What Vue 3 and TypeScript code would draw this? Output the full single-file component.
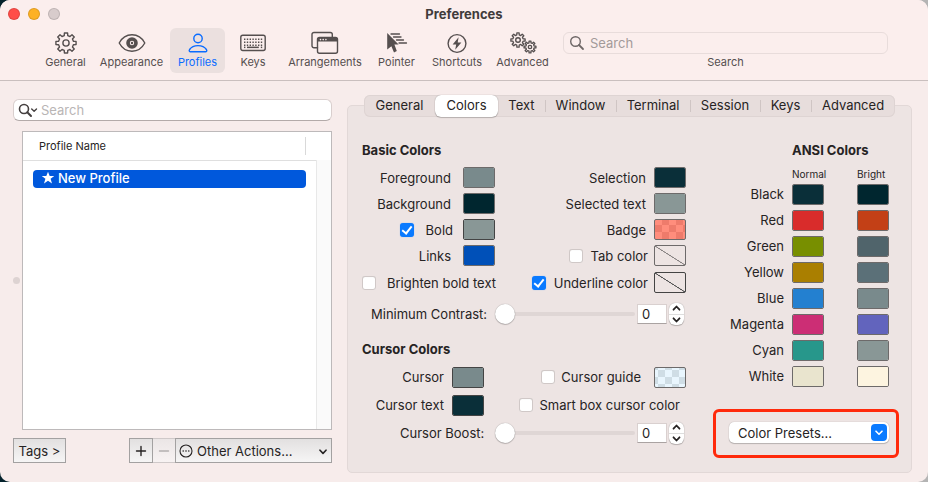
<script setup lang="ts">
import { ref } from 'vue'

interface Well {
  id: string
  label: string
  color: string
  kind?: 'clear' | 'clear-strong' | 'badge' | 'guide' | 'strong'
  check?: boolean
}

/** Outline of a cog wheel with flat-topped teeth. */
function gear(cx: number, cy: number, teeth: number, outer: number, inner: number): string {
  const step = (Math.PI * 2) / teeth
  const points: string[] = []
  for (let i = 0; i < teeth; i++) {
    const mid = i * step - Math.PI / 2
    const corners: [number, number][] = [
      [inner, -0.3],
      [outer, -0.2],
      [outer, 0.2],
      [inner, 0.3],
    ]
    for (const [r, offset] of corners) {
      const a = mid + offset * step
      points.push(`${(cx + r * Math.cos(a)).toFixed(2)} ${(cy + r * Math.sin(a)).toFixed(2)}`)
    }
  }
  return `M${points.join('L')}Z`
}

const bigGear = gear(12, 12, 8, 10.2, 7.6)
const leftGear = gear(9, 9, 8, 7.2, 5.2)
const rightGear = gear(21, 16, 8, 6, 4.2)

const keyDots: { x: number; y: number }[] = []
for (const y of [4, 7, 10]) {
  for (let i = 0; i < 7; i++) keyDots.push({ x: 4 + i * 2.8, y })
}

const tools = ['General', 'Appearance', 'Profiles', 'Keys', 'Arrangements', 'Pointer', 'Shortcuts', 'Advanced']
const activeTool = ref('Profiles')

const tabs = ['General', 'Colors', 'Text', 'Window', 'Terminal', 'Session', 'Keys', 'Advanced']
const activeTab = ref('Colors')

const basicLeft: Well[] = [
  { id: 'foreground', label: 'Foreground', color: '#798a8c' },
  { id: 'background', label: 'Background', color: '#00262f' },
  { id: 'bold', label: 'Bold', color: '#899796', check: true, kind: 'strong' },
  { id: 'links', label: 'Links', color: '#0050b8' },
]
const basicRight: Well[] = [
  { id: 'selection', label: 'Selection', color: '#0a2f39' },
  { id: 'selected-text', label: 'Selected text', color: '#899796' },
  { id: 'badge', label: 'Badge', color: '#ff8d7c', kind: 'badge' },
  { id: 'tab-color', label: 'Tab color', color: '#ede4e3', check: false, kind: 'clear' },
  { id: 'underline', label: 'Underline color', color: '#ede4e3', check: true, kind: 'clear-strong' },
]
const ansi = [
  { name: 'Black', normal: '#0a2f39', bright: '#00262f' },
  { name: 'Red', normal: '#d92c2b', bright: '#c34016' },
  { name: 'Green', normal: '#788f00', bright: '#50646b' },
  { name: 'Yellow', normal: '#aa7f00', bright: '#5b7078' },
  { name: 'Blue', normal: '#2380d0', bright: '#798a8c' },
  { name: 'Magenta', normal: '#cc2e75', bright: '#6264bd' },
  { name: 'Cyan', normal: '#27978b', bright: '#899796' },
  { name: 'White', normal: '#e9e4ce', bright: '#fdf4e0' },
]

const contrast = ref(0)
const boost = ref(0)
</script>

<template>
  <main class="window">
    <header class="titlebar">
      <div class="lights">
        <button class="light red" aria-label="Close"></button>
        <button class="light amber" aria-label="Minimize"></button>
        <button class="light grey" aria-label="Zoom" disabled></button>
      </div>
      <h1>Preferences</h1>
    </header>

    <nav class="toolbar">
      <button
        v-for="tool in tools"
        :key="tool"
        class="tool"
        :class="{ active: tool === activeTool }"
        @click="activeTool = tool"
      >
        <svg v-if="tool === 'General'" width="24" height="24" viewBox="0 0 24 24" class="line">
          <path :d="bigGear" /><circle cx="12" cy="12" r="3.1" />
        </svg>
        <svg v-else-if="tool === 'Appearance'" width="28" height="24" viewBox="0 0 28 24" class="line">
          <path d="M1.2 12C4 6.800 8.600 3.800 14 3.800S24 6.800 26.800 12C24 17.200 19.400 20.200 14 20.200S4 17.200 1.200 12Z" />
          <circle cx="14" cy="12" r="4" stroke-width="3.600" />
          <circle cx="14" cy="12" r="1.200" class="solid" />
        </svg>
        <svg v-else-if="tool === 'Profiles'" width="24" height="24" viewBox="0 0 24 24" class="line">
          <circle cx="12" cy="7.500" r="4.200" />
          <path d="M4.200 20.700H19.800C21 20.700 21 19.500 20.400 18.500C18.800 16 15.700 14.600 12 14.600S5.200 16 3.600 18.500C3 19.500 3 20.700 4.200 20.700Z" />
        </svg>
        <svg v-else-if="tool === 'Keys'" width="26" height="24" viewBox="0 0 26 24" class="line">
          <rect x="0.800" y="4.300" width="24.400" height="15.200" rx="2" />
          <g class="solid">
            <rect v-for="(dot, i) in keyDots" :key="i" :x="dot.x" :y="dot.y + 3.500" width="1.400" height="1.500" />
            <rect x="4" y="15.600" width="1.400" height="1.500" />
            <rect x="7" y="15.600" width="11.800" height="1.500" />
            <rect x="20.800" y="15.600" width="1.400" height="1.500" />
          </g>
        </svg>
        <svg v-else-if="tool === 'Arrangements'" width="28" height="24" viewBox="0 0 28 24" class="line">
          <path d="M6.500 16.800H3A2 2 0 0 1 1 14.800V3.500A2 2 0 0 1 3 1.500H19.300A2 2 0 0 1 21.300 3.500V6" />
          <rect x="6.500" y="6.500" width="20" height="15.800" rx="2" />
          <path class="solid" d="M6.500 10.600V8.500A2 2 0 0 1 8.500 6.500H24.500A2 2 0 0 1 26.500 8.500V10.600Z" />
          <g class="dots"><circle cx="9.500" cy="8.600" r="0.800" /><circle cx="12.200" cy="8.600" r="0.800" /><circle cx="14.900" cy="8.600" r="0.800" /></g>
        </svg>
        <svg v-else-if="tool === 'Pointer'" width="22" height="24" viewBox="0 0 22 24" class="line">
          <path class="solid" d="M1.200 2L12.600 13.600H8.400L10.800 20L8 21.400L5.400 15.200L1.200 18.600Z" />
          <path stroke-width="1.300" d="M5 3H13.500M7.500 6H15M10.500 9H17.500M13 12H20.500" />
        </svg>
        <svg v-else-if="tool === 'Shortcuts'" width="24" height="24" viewBox="0 0 24 24" class="line">
          <circle cx="12" cy="12.500" r="8.900" />
          <path class="solid" d="M13.600 6.300L7.600 13.400H11.200L10.200 18.800L16.400 11.500H12.700Z" />
        </svg>
        <svg v-else width="28" height="24" viewBox="0 0 28 24" class="line">
          <path stroke-width="1.300" :d="leftGear" /><circle cx="9" cy="9" r="2.300" />
          <path stroke-width="1.300" :d="rightGear" /><circle cx="21" cy="16" r="1.700" stroke-width="1.300" />
        </svg>
        <span>{{ tool }}</span>
      </button>
      <div class="toolsearch">
        <div class="field flat">
          <svg width="16" height="16" viewBox="0 0 16 16" class="line"><circle cx="6.500" cy="6.500" r="4.800" /><path d="M10 10L14 14" stroke-width="1.800" /></svg>
          <input id="tool-search" type="search" placeholder="Search" />
        </div>
        <label for="tool-search">Search</label>
      </div>
    </nav>

    <div class="content">
      <section class="profiles">
        <div class="field">
          <svg width="20" height="16" viewBox="0 0 20 16" class="line">
            <circle cx="6" cy="7" r="4.500" stroke-width="1.600" /><path d="M9.300 10.300L13 14" stroke-width="2" /><path d="M13.700 7L16.100 9.300L18.500 7" />
          </svg>
          <input type="search" placeholder="Search" aria-label="Search profiles" />
        </div>
        <div class="list-row">
          <span class="grip"></span>
          <div class="list">
            <div class="list-head"><span>Profile Name</span></div>
            <div class="list-body">
              <ul>
                <li>
                  <svg width="14" height="14" viewBox="0 0 14 14"><path fill="currentColor" d="M7 .8L8.700 5H13.300L9.600 7.800L11 12.500L7 9.700L3 12.500L4.400 7.800L.7 5H5.300Z" /></svg>
                  New Profile
                </li>
              </ul>
              <div class="gutter"></div>
            </div>
          </div>
        </div>
        <div class="actions">
          <button class="square tags">Tags &gt;</button>
          <button class="square add" aria-label="Add profile"><svg width="12" height="12" viewBox="0 0 12 12" class="line"><path d="M1.500 6H10.500M6 1.500V10.500" /></svg></button>
          <button class="square remove" aria-label="Remove profile" disabled><svg width="12" height="12" viewBox="0 0 12 12" class="line"><path d="M1.500 6H10.500" /></svg></button>
          <div class="other">
            <svg width="14" height="14" viewBox="0 0 14 14" class="line lead">
              <circle cx="7" cy="7" r="6" stroke-width="1.100" />
              <g class="solid"><circle cx="4.200" cy="7" r="0.800" /><circle cx="7" cy="7" r="0.800" /><circle cx="9.800" cy="7" r="0.800" /></g>
            </svg>
            <select aria-label="Other actions"><option>Other Actions...</option></select>
            <svg width="8" height="6" viewBox="0 0 8 6" class="line trail"><path stroke-width="1.600" d="M1 1.200L4 4.400L7 1.200" /></svg>
          </div>
        </div>
      </section>

      <section class="detail">
        <div class="tabs" role="tablist">
          <button
            v-for="tab in tabs"
            :key="tab"
            role="tab"
            :aria-selected="tab === activeTab"
            :class="{ selected: tab === activeTab }"
            @click="activeTab = tab"
          >
            {{ tab }}
          </button>
        </div>

        <div class="panel">
          <div class="settings">
            <h2>Basic Colors</h2>
            <div class="pair">
              <div class="stack">
                <div v-for="well in basicLeft" :key="well.id" class="row wide" :class="{ toggle: well.check !== undefined }">
                  <input v-if="well.check !== undefined" :id="well.id + '-on'" type="checkbox" class="check" :checked="well.check" />
                  <label :for="well.check !== undefined ? well.id + '-on' : well.id">{{ well.label }}</label>
                  <input :id="well.id" type="color" class="well" :class="well.kind" :value="well.color" :aria-label="well.label + ' color well'" />
                </div>
                <div class="row start">
                  <input id="brighten" type="checkbox" class="check" />
                  <label for="brighten">Brighten bold text</label>
                </div>
              </div>
              <div class="stack">
                <div v-for="well in basicRight" :key="well.id" class="row" :class="{ toggle: well.check !== undefined }">
                  <input v-if="well.check !== undefined" :id="well.id + '-on'" type="checkbox" class="check" :checked="well.check" />
                  <label :for="well.check !== undefined ? well.id + '-on' : well.id">{{ well.label }}</label>
                  <input :id="well.id" type="color" class="well" :class="well.kind" :value="well.color" :aria-label="well.label + ' color well'" />
                </div>
              </div>
            </div>

            <div class="slider-row">
              <label for="contrast">Minimum Contrast:</label>
              <input id="contrast" v-model.number="contrast" type="range" min="0" max="100" class="slider" />
              <input v-model.number="contrast" type="text" class="number" aria-label="Minimum contrast value" />
              <div class="stepper">
                <button aria-label="Increase contrast" @click="contrast++"><svg width="9" height="6" viewBox="0 0 9 6" class="line"><path stroke-width="1.800" d="M1.500 4.700L4.500 1.500L7.500 4.700" /></svg></button>
                <button aria-label="Decrease contrast" @click="contrast--"><svg width="9" height="6" viewBox="0 0 9 6" class="line"><path stroke-width="1.800" d="M1.500 1.300L4.500 4.500L7.500 1.300" /></svg></button>
              </div>
            </div>

            <h2 class="second">Cursor Colors</h2>
            <div class="cursor-row">
              <div class="row cursor-cell">
                <label for="cursor">Cursor</label>
                <input id="cursor" type="color" class="well strong" value="#798a8c" />
              </div>
              <div class="row guide-cell">
                <input id="guide-on" type="checkbox" class="check" />
                <label for="guide-on">Cursor guide</label>
                <input type="color" class="well guide" value="#e8f5fd" aria-label="Cursor guide color" />
              </div>
            </div>
            <div class="cursor-row">
              <div class="row cursor-cell">
                <label for="cursor-text">Cursor text</label>
                <input id="cursor-text" type="color" class="well strong" value="#0a2f39" />
              </div>
              <div class="row smart-cell">
                <input id="smart" type="checkbox" class="check" />
                <label for="smart">Smart box cursor color</label>
              </div>
            </div>
            <div class="slider-row last">
              <label for="boost">Cursor Boost:</label>
              <input id="boost" v-model.number="boost" type="range" min="0" max="100" class="slider" />
              <input v-model.number="boost" type="text" class="number" aria-label="Cursor boost value" />
              <div class="stepper">
                <button aria-label="Increase boost" @click="boost++"><svg width="9" height="6" viewBox="0 0 9 6" class="line"><path stroke-width="1.800" d="M1.500 4.700L4.500 1.500L7.500 4.700" /></svg></button>
                <button aria-label="Decrease boost" @click="boost--"><svg width="9" height="6" viewBox="0 0 9 6" class="line"><path stroke-width="1.800" d="M1.500 1.300L4.500 4.500L7.500 1.300" /></svg></button>
              </div>
            </div>
          </div>

          <div class="ansi">
            <h2>ANSI Colors</h2>
            <table>
              <thead>
                <tr><td></td><th scope="col">Normal</th><th scope="col">Bright</th></tr>
              </thead>
              <tbody>
                <tr v-for="c in ansi" :key="c.name">
                  <th scope="row">{{ c.name }}</th>
                  <td><input type="color" class="well" :value="c.normal" :aria-label="c.name + ' normal'" /></td>
                  <td><input type="color" class="well" :value="c.bright" :aria-label="c.name + ' bright'" /></td>
                </tr>
              </tbody>
            </table>
            <div class="callout">
              <div class="presets">
                <select aria-label="Color presets"><option>Color Presets...</option></select>
                <span class="cap"><svg width="8" height="6" viewBox="0 0 8 6" class="line"><path stroke-width="1.600" d="M1 1.200L4 4.200L7 1.200" /></svg></span>
              </div>
            </div>
          </div>
        </div>
      </section>
    </div>
  </main>
</template>

<style>
body {
  background: linear-gradient(to right, #04222c 50%, #b4b4b4 50%);
}
</style>

<style scoped>
* {
  box-sizing: border-box;
}
.window {
  display: flex;
  flex-direction: column;
  min-height: 100vh;
  border-radius: 10px;
  overflow: hidden;
  background: #f7eceb;
  color: #262323;
  font: 13px/18px Inter, "Liberation Sans", sans-serif;
}
button,
input,
select {
  margin: 0;
  padding: 0;
  border: 0;
  background: none;
  color: inherit;
  font: inherit;
}
h1,
h2,
ul {
  margin: 0;
  padding: 0;
  font-size: 13px;
}
svg {
  display: block;
  flex: none;
}
.line {
  fill: none;
  stroke: currentColor;
  stroke-width: 1.4;
  stroke-linejoin: round;
  stroke-linecap: round;
}
.solid {
  fill: currentColor;
  stroke: none;
}
.dots {
  fill: #fbeeed;
  stroke: none;
}
.titlebar {
  display: grid;
  grid-template-columns: 60px 1fr 60px;
  align-items: center;
  height: 28px;
  padding: 0 8px;
  background: #fbeeed;
}
.lights {
  display: flex;
  gap: 8px;
}
.light {
  width: 12px;
  height: 12px;
  border: 1px solid #0000001f;
  border-radius: 50%;
}
.red {
  background: #ff4d48;
}
.amber {
  background: #fdb124;
}
.grey {
  background: #d8cccc;
}
h1 {
  color: #403b3b;
  text-align: center;
}
.toolbar {
  display: grid;
  grid-template-columns: 55px 77px 55px 56px 88px 55px 66px 65px 1fr;
  padding: 0 40px 7px 38px;
  border-bottom: 1px solid #c9bfbe;
  background: #fbeeed;
  color: #554f4f;
  font-size: 11px;
  line-height: 14px;
}
.tool {
  display: flex;
  flex-direction: column;
  align-items: center;
  height: 45px;
  padding-top: 3px;
  border-radius: 6px;
}
.tool.active {
  background: #ebe0df;
  color: #0a6cff;
}
.toolsearch {
  display: flex;
  flex-direction: column;
  align-items: center;
  gap: 1px;
  padding: 4px 0 0 8px;
}
.field {
  display: flex;
  align-items: center;
  width: 100%;
  height: 22px;
  padding: 0 4px;
  gap: 3px;
  border: 1px solid #d9cfce;
  border-bottom-color: #b3aaa9;
  border-radius: 6px;
  background: #fff;
  color: #454040;
  font-size: 13px;
}
.field.flat {
  padding-left: 5px;
  gap: 5px;
  border-color: #e8dcdb;
  background: none;
  color: #6e6767;
}
.field input {
  flex: 1;
  min-width: 0;
  outline: none;
  appearance: none;
}
.field input::placeholder {
  color: #b9b5b5;
}
.field.flat input::placeholder {
  color: #a39a9a;
}
.content {
  display: grid;
  grid-template-columns: minmax(0, 319fr) minmax(0, 565fr);
  flex: 1;
  gap: 15px;
  padding: 14px 16px 9px 13px;
}
.profiles {
  display: flex;
  flex-direction: column;
  padding: 4px 0 10px;
}
.list-row {
  display: flex;
  flex: 1;
  align-items: center;
  gap: 2px;
  margin: 10px 0 8px;
}
.grip {
  flex: none;
  width: 7px;
  height: 7px;
  border-radius: 50%;
  background: #ddd3d2;
}
.list {
  display: flex;
  flex: 1;
  flex-direction: column;
  align-self: stretch;
  border: 1px solid #bdb9ba;
  background: #fff;
}
.list-head {
  height: 28px;
  padding: 5px 25px 5px 16px;
  font-size: 11px;
}
.list-head span {
  display: block;
  border-right: 1px solid #d9d9d9;
}
.list-body {
  display: flex;
  flex: 1;
}
.list-body ul {
  flex: 1;
  padding: 9px 10px 0;
  border-top: 1px solid #dfdfdf;
  list-style: none;
}
.list-body li {
  display: flex;
  align-items: center;
  gap: 3px;
  height: 18px;
  padding: 0 8px 2px;
  border-radius: 4px;
  background: #0058dc;
  color: #fff;
  font-weight: 500;
}
.gutter {
  width: 15px;
  border-left: 1px solid #e8e8e8;
  background: #fafafa;
}
.actions {
  display: flex;
}
.square,
.other {
  display: flex;
  align-items: center;
  justify-content: center;
  height: 25px;
  border: 1px solid #a3a1a1;
  background: linear-gradient(#e2e0e0, #f6f5f5);
}
.tags {
  width: 53px;
  margin-right: auto;
}
.add {
  width: 24px;
}
.remove {
  width: 22px;
  border-color: #cfc9c9;
  border-left: 0;
  border-right: 0;
  background: linear-gradient(#ebe6e6, #f7f2f2);
  color: #b3aeae;
}
.other {
  position: relative;
  width: 157px;
}
.other select {
  width: 100%;
  height: 23px;
  padding-left: 21px;
  appearance: none;
}
.lead,
.trail {
  position: absolute;
  top: 5px;
  left: 3px;
  pointer-events: none;
}
.trail {
  top: 10px;
  right: 4px;
  left: auto;
}
.detail {
  display: flex;
  flex-direction: column;
}
.tabs {
  z-index: 1;
  display: grid;
  grid-template-columns: 71fr 63fr 47fr 71fr 74fr 70fr 51fr 84fr;
  height: 22px;
  margin: 0 17px -12px;
  border-radius: 6px;
  background: #e7dddc;
  box-shadow: inset 0 0 0 1px #ded4d3;
}
.tabs button {
  position: relative;
  padding-bottom: 2px;
  border-radius: 6px;
}
.tabs button:nth-child(n + 4)::before {
  position: absolute;
  top: 5px;
  left: 0;
  width: 1px;
  height: 12px;
  background: #cfc5c4;
  content: "";
}
.tabs .selected {
  background: #fff;
  box-shadow: 0 0 1px #0006, 0 1px 1px #0003;
}
.panel {
  display: flex;
  flex: 1;
  justify-content: space-between;
  padding: 35px 22px 13px 14px;
  border: 1px solid #e2d8d7;
  border-radius: 5px;
  background: #ede4e3;
}
.settings {
  width: 324px;
}
h2 {
  line-height: 18px;
}
.pair {
  display: flex;
  justify-content: space-between;
  margin-top: 8px;
}
.stack {
  display: flex;
  flex-direction: column;
  gap: 5px;
}
.stack .row:last-child {
  margin-top: 1px;
}
.row {
  display: flex;
  align-items: center;
  justify-content: flex-end;
  gap: 8px;
  height: 21px;
  white-space: nowrap;
}
.row.wide {
  gap: 12px;
}
.row.start {
  justify-content: flex-start;
  gap: 11px;
}
.toggle .well {
  margin-left: -2px;
}
.pair .start {
  width: 133px;
}
.well {
  display: block;
  flex: none;
  width: 32px;
  height: 21px;
  border: 1px solid #6d6a6a;
  border-radius: 2px;
  overflow: hidden;
  appearance: none;
}
.well::-webkit-color-swatch-wrapper {
  padding: 0;
}
.well::-webkit-color-swatch {
  border: 0;
  border-radius: 0;
}
.strong,
.clear-strong {
  border-color: #444;
}
.clear::-webkit-color-swatch,
.clear-strong::-webkit-color-swatch,
.badge::-webkit-color-swatch,
.guide::-webkit-color-swatch {
  visibility: hidden;
}
.clear {
  background: linear-gradient(to bottom left, transparent 48%, #888383 49%, #888383 51%, transparent 52%);
}
.clear-strong {
  background: linear-gradient(to bottom left, transparent 48%, #555 49%, #555 51%, transparent 52%);
}
.badge {
  background: repeating-conic-gradient(#ee7b6b 0 25%, #ff8d7c 0 50%) 0 -2px / 14px 14px;
}
.guide {
  background: repeating-conic-gradient(#e9f6fe 0 25%, #cfdde5 0 50%) 3px 2px / 14px 14px;
}
.check {
  flex: none;
  width: 14px;
  height: 14px;
  border-radius: 3px;
  background: #fff;
  box-shadow: inset 0 0 0 1px #d0c8c7, inset 0 1px 1px #0002;
  appearance: none;
}
.check:checked {
  background: #0a7aff;
  box-shadow: 0 0 1px #0a7aff80;
}
.check:checked::after {
  display: block;
  box-sizing: border-box;
  width: 6px;
  height: 10px;
  margin: 1px auto 0;
  border: solid #fff;
  border-width: 0 2px 2px 0;
  transform: rotate(38deg);
  content: "";
}
.slider-row {
  display: grid;
  grid-template-columns: 124px 147px 30px 15px;
  align-items: center;
  height: 28px;
  margin-top: 7px;
  column-gap: 2px;
}
.slider-row label {
  padding-left: 9px;
  white-space: nowrap;
}
.slider-row.last {
  margin-top: 0;
}
.slider-row.last label {
  padding-left: 38px;
}
.slider {
  width: 100%;
  height: 22px;
  padding-left: 7px;
  appearance: none;
}
.slider::-webkit-slider-runnable-track {
  height: 4px;
  border-radius: 2px;
  background: #dfd6d5;
}
.slider::-webkit-slider-thumb {
  width: 20px;
  height: 20px;
  margin-top: -8px;
  border-radius: 50%;
  background: #fff;
  box-shadow: 0 0 1px #0006, 0 1px 1px #0003;
  appearance: none;
}
.number {
  width: 30px;
  height: 20px;
  padding-left: 4px;
  border: 1px solid #d9d0cf;
  border-bottom-color: #aaa3a2;
  background: #fff;
}
.stepper {
  display: flex;
  flex-direction: column;
  height: 22px;
  border-radius: 6px;
  background: #fff;
  box-shadow: 0 0 1px #0006, 0 1px 1px #0003;
}
.stepper button {
  display: flex;
  flex: 1;
  align-items: center;
  justify-content: center;
}
.stepper button + button {
  border-top: 1px solid #ddd;
}
.second {
  margin: 12px 0 5px;
}
.cursor-row {
  display: flex;
  align-items: center;
  justify-content: space-between;
  height: 28px;
}
.cursor-cell {
  width: 122px;
}
.guide-cell,
.smart-cell {
  gap: 6px;
}
.guide-cell .well {
  margin-left: 7px;
}
.smart-cell {
  padding-right: 6px;
}
.ansi {
  display: flex;
  flex-direction: column;
  align-items: flex-end;
}
.ansi h2 {
  width: 97px;
  white-space: nowrap;
}
table {
  border-collapse: collapse;
}
th,
td {
  padding: 2px 0 3px;
  font-weight: 400;
  line-height: 21px;
  text-align: left;
}
tbody th {
  padding-right: 8px;
  text-align: right;
}
thead td {
  padding: 0;
}
thead th {
  width: 32px;
  height: 23px;
  padding: 6px 0 0;
  font-size: 10px;
  line-height: 14px;
  white-space: nowrap;
}
thead th:nth-child(2) {
  width: 65px;
}
.callout {
  width: 186px;
  margin: 19px -10px 0 0;
  padding: 10px 7px 12px 13px;
  border: 3px solid #ff2a0c;
  border-radius: 6px;
}
.presets {
  position: relative;
  height: 21px;
  border-radius: 5px;
  background: #fff;
  box-shadow: 0 0 1px #0005, 0 1px 1px #0003;
}
.presets select {
  width: 100%;
  height: 21px;
  padding-left: 9px;
  appearance: none;
}
.cap {
  position: absolute;
  top: 2px;
  right: 2px;
  display: grid;
  width: 16px;
  height: 17px;
  border-radius: 4px;
  background: #0a7aff;
  color: #fff;
  place-items: center;
  pointer-events: none;
}
</style>
